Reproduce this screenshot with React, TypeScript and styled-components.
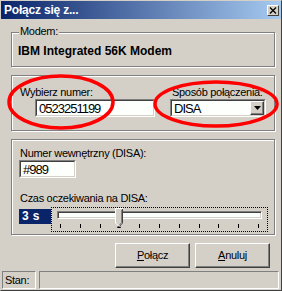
import styled, {createGlobalStyle} from 'styled-components';

const GlobalStyle = createGlobalStyle`
  html, body {
    margin: 0;
    padding: 0;
    background: #d4d0c8;
  }
  * {
    box-sizing: border-box;
  }
`;

const Window = styled.div`
  position: relative;
  width: 282px;
  height: 291px;
  background: #d4d0c8;
  border-top: 1px solid #d4d0c8;
  border-left: 1px solid #d4d0c8;
  border-right: 1px solid #404040;
  border-bottom: 1px solid #404040;
  display: flex;
  flex-direction: column;
  font-family: "Liberation Sans", Arial, sans-serif;
  font-size: 11px;
  letter-spacing: -0.3px;
  color: #000;
  overflow: hidden;
`;

const TitleBar = styled.div`
  height: 18px;
  display: flex;
  align-items: center;
  justify-content: space-between;
  padding: 0 2px 0 3px;
  background: linear-gradient(to right, #0a246a, #a6caf0);
`;

const Title = styled.span`
  color: #fff;
  font-weight: bold;
  font-size: 12px;
  letter-spacing: -0.2px;
`;

const CloseButton = styled.div`
  width: 12px;
  height: 11px;
  background: #d4d0c8;
  border-top: 1px solid #fff;
  border-left: 1px solid #fff;
  border-right: 1px solid #404040;
  border-bottom: 1px solid #404040;
  display: flex;
  align-items: center;
  justify-content: center;
`;

const Body = styled.div`
  display: flex;
  flex-direction: column;
  padding: 0 0 0 10px;
`;

const Group = styled.div<{top: number; height: number}>`
  position: relative;
  width: 264px;
  height: ${p => p.height}px;
  margin-top: ${p => p.top}px;
  border: 1px solid #808080;
  box-shadow: inset 1px 1px 0 #fff, 1px 1px 0 #fff;
`;

const Legend = styled.span`
  position: absolute;
  top: -8px;
  left: 7px;
  padding: 0 1px;
  background: #d4d0c8;
`;

const ModemName = styled.div`
  padding: 11px 0 0 6px;
  font-weight: bold;
  font-size: 12px;
  letter-spacing: 0;
`;

const DialRow = styled.div`
  display: flex;
  padding: 9px 0 0 0;
`;

const Column = styled.div<{left: number; width: number}>`
  display: flex;
  flex-direction: column;
  margin-left: ${p => p.left}px;
  width: ${p => p.width}px;
`;

const Label = styled.span<{indent?: number; top?: number}>`
  height: 14px;
  line-height: 14px;
  margin-left: ${p => p.indent ?? 0}px;
  margin-top: ${p => p.top ?? 0}px;
  white-space: nowrap;
`;

const Sunken = styled.div<{width: number; indent?: number}>`
  width: ${p => p.width}px;
  height: 18px;
  margin-left: ${p => p.indent ?? 0}px;
  border-top: 1px solid #808080;
  border-left: 1px solid #808080;
  border-right: 1px solid #fff;
  border-bottom: 1px solid #fff;
  display: flex;
`;

const Field = styled.div`
  flex: 1;
  display: flex;
  align-items: center;
  padding-left: 2px;
  background: #fcfffc;
  border-top: 1px solid #404040;
  border-left: 1px solid #404040;
  border-right: 1px solid #d4d0c8;
  border-bottom: 1px solid #d4d0c8;
  font-size: 13px;
  letter-spacing: -1px;
`;

const SelectField = styled(Field)`
  align-items: stretch;
  padding-right: 0;
`;

const SelectText = styled.span`
  display: flex;
  align-items: center;
  flex: 1;
`;

const DropButton = styled.div`
  width: 14px;
  background: #d4d0c8;
  border-top: 1px solid #fff;
  border-left: 1px solid #fff;
  border-right: 1px solid #404040;
  border-bottom: 1px solid #404040;
  box-shadow: inset -1px -1px 0 #808080;
  display: flex;
  align-items: center;
  justify-content: center;
`;

const DisaBox = styled.div`
  display: flex;
  flex-direction: column;
  padding: 6px 0 0 7px;
`;

const SliderRow = styled.div`
  display: flex;
  align-items: flex-start;
  margin-top: 2px;
`;

const ValueBox = styled.div`
  width: 32px;
  height: 15px;
  margin-top: 2px;
  padding-left: 3px;
  background: #0a246a;
  color: #fff;
  font-weight: bold;
  font-size: 12px;
  line-height: 15px;
  letter-spacing: 0.4px;
  white-space: pre;
`;

const SliderFrame = styled.div`
  position: relative;
  width: 217px;
  height: 25px;
  border: 1px dotted #000;
  padding: 3px 0 0 5px;
`;

const Track = styled.div`
  width: 205px;
  height: 8px;
  background: #fcfffc;
  border-top: 1px solid #808080;
  border-left: 1px solid #808080;
  border-right: 1px solid #fff;
  border-bottom: 1px solid #fff;
  box-shadow: inset 1px 1px 0 #404040, inset -1px -1px 0 #d4d0c8;
`;

const Ticks = styled.div`
  display: flex;
  justify-content: space-between;
  width: 199px;
  margin: 5px 0 0 3px;
  height: 4px;
`;

const Tick = styled.div<{active: boolean}>`
  width: 1px;
  height: 4px;
  background: ${p => (p.active ? 'transparent' : '#000')};
  position: relative;
  &::after {
    content: '';
    display: ${p => (p.active ? 'block' : 'none')};
    position: absolute;
    left: -2px;
    top: 0;
    border-left: 2.5px solid transparent;
    border-right: 2.5px solid transparent;
    border-bottom: 4px solid #000;
  }
`;

const Thumb = styled.svg`
  position: absolute;
  top: 0;
`;

const ButtonRow = styled.div`
  display: flex;
  justify-content: flex-end;
  gap: 5px;
  margin: 8px 11px 0 0;
`;

const Button = styled.div`
  width: 75px;
  height: 25px;
  display: flex;
  align-items: center;
  justify-content: center;
  background: #d4d0c8;
  border-top: 1px solid #fff;
  border-left: 1px solid #fff;
  border-right: 1px solid #404040;
  border-bottom: 1px solid #404040;
  box-shadow: inset -1px -1px 0 #808080;
  padding-bottom: 1px;
`;

const StatusBar = styled.div`
  display: flex;
  gap: 3px;
  margin: 3px 2px 0 1px;
  height: 18px;
`;

const StatusPanel = styled.div<{width?: number}>`
  ${p => (p.width ? `width: ${p.width}px;` : 'flex: 1;')}
  border-top: 1px solid #808080;
  border-left: 1px solid #808080;
  border-right: 1px solid #fff;
  border-bottom: 1px solid #fff;
  padding: 1px 0 0 2px;
  line-height: 14px;
`;

const Marks = styled.svg`
  position: absolute;
  left: 0;
  top: 0;
  pointer-events: none;
`;

const TICK_COUNT = 11;
const TICK_STEP = 19.8;

export default function App() {
  const seconds = 3;

  return (
    <>
      <GlobalStyle />
      <Window>
        <TitleBar>
          <Title>Połącz się z...</Title>
          <CloseButton>
            <svg width="8" height="7" viewBox="0 0 8 7">
              <path d="M1 0.5 L7 6.5 M7 0.5 L1 6.5" stroke="#000" strokeWidth="1.3" />
            </svg>
          </CloseButton>
        </TitleBar>

        <Body>
          <Group top={13} height={35}>
            <Legend>Modem:</Legend>
            <ModemName>IBM Integrated 56K Modem</ModemName>
          </Group>

          <Group top={8} height={56}>
            <DialRow>
              <Column left={8} width={145}>
                <Label>Wybierz numer:</Label>
                <Sunken width={120} indent={15}>
                  <Field>0523251199</Field>
                </Sunken>
              </Column>
              <Column left={5} width={100}>
                <Label indent={2}>Sposób połączenia:</Label>
                <Sunken width={96}>
                  <SelectField>
                    <SelectText>DISA</SelectText>
                    <DropButton>
                      <svg width="7" height="4" viewBox="0 0 7 4">
                        <path d="M0 0 H7 L3.5 4 Z" fill="#000" />
                      </svg>
                    </DropButton>
                  </SelectField>
                </Sunken>
              </Column>
            </DialRow>
          </Group>

          <Group top={8} height={96}>
            <DisaBox>
              <Label indent={1}>Numer wewnętrzny (DISA):</Label>
              <Sunken width={57}>
                <Field>#989</Field>
              </Sunken>
              <Label indent={1} top={13}>Czas oczekiwania na DISA:</Label>
              <SliderRow>
                <ValueBox>{`${seconds} s`}</ValueBox>
                <SliderFrame>
                  <Track />
                  <Ticks>
                    {Array.from({length: TICK_COUNT}, (_, i) => (
                      <Tick key={i} active={i === seconds} />
                    ))}
                  </Ticks>
                  <Thumb
                    width="9"
                    height="20"
                    viewBox="0 0 9 20"
                    style={{left: 8 + seconds * TICK_STEP - 4}}
                  >
                    <path d="M0.5 0.5 H8 V15 L4.5 19 L0.5 15 Z" fill="#d4d0c8" />
                    <path d="M0.5 15 V0.5 H8" stroke="#fff" fill="none" />
                    <path d="M7.5 1 V15 L4.5 18.5" stroke="#404040" fill="none" />
                    <path d="M6.5 2 V14.5 L4.5 17" stroke="#808080" fill="none" />
                    <path d="M0.5 15 L4 18.5" stroke="#fff" fill="none" />
                  </Thumb>
                </SliderFrame>
              </SliderRow>
            </DisaBox>
          </Group>

          <ButtonRow>
            <Button>
              <span><u>P</u>ołącz</span>
            </Button>
            <Button>
              <span><u>A</u>nuluj</span>
            </Button>
          </ButtonRow>
        </Body>

        <StatusBar>
          <StatusPanel width={34}>Stan:</StatusPanel>
          <StatusPanel />
        </StatusBar>

        <Marks width="282" height="291" viewBox="0 0 282 291">
          <ellipse cx="60" cy="101" rx="52" ry="26" fill="none" stroke="#f00" strokeWidth="3.5" />
          <ellipse cx="215" cy="103" rx="61" ry="22" fill="none" stroke="#f00" strokeWidth="3.5" />
        </Marks>
      </Window>
    </>
  );
}
